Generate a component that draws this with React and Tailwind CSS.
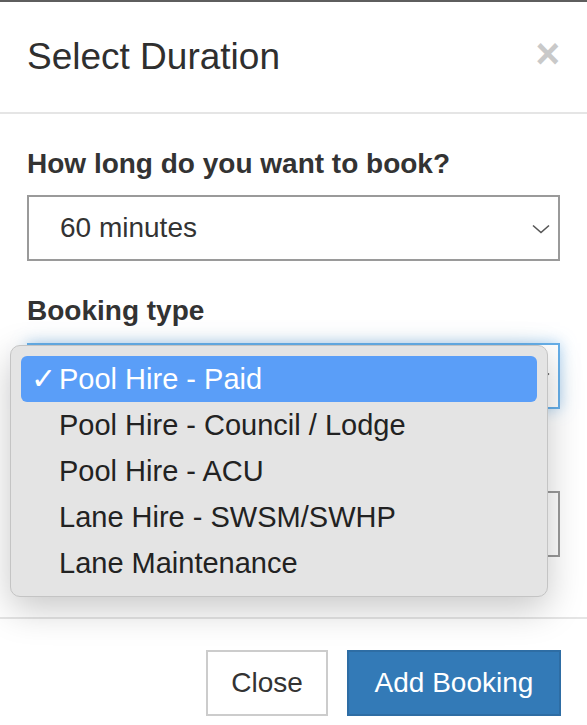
import { useState } from 'react';

const font = { fontFamily: '"Liberation Sans", Arial, Helvetica, sans-serif' };

const bookingTypes = [
  'Pool Hire - Paid',
  'Pool Hire - Council / Lodge',
  'Pool Hire - ACU',
  'Lane Hire - SWSM/SWHP',
  'Lane Maintenance',
];

const Chevron = ({ className }) => (
  <svg className={className} width="18" height="10" viewBox="0 0 18 10" fill="none">
    <polyline points="1,1.5 9,8.5 17,1.5" stroke="#555" strokeWidth="1.6" />
  </svg>
);

const App = () => {
  const [selected] = useState(0);

  return (
    <div className="relative h-[725px] w-[587px] overflow-hidden bg-white text-[#333]" style={font}>
      <div className="h-[2px] bg-[#5e5e5e]" />

      {/* header */}
      <div className="flex h-[112px] items-center justify-between border-b-2 border-[#e5e5e5] pl-[27px] pr-[27px]">
        <h4 className="text-[37px] leading-[40px] text-[#2f2f2f]">Select Duration</h4>
        <span className="text-[42px] font-bold leading-none text-[#c9c9c9] -mt-[6px]">×</span>
      </div>

      {/* body */}
      <div className="px-[27px] pt-[30px] pb-[30px]">
        <div className="mb-[30px]">
          <label className="mb-[11px] block text-[28px] font-bold leading-[40px]">How long do you want to book?</label>
          <div className="relative flex h-[66px] items-center border-2 border-[#9a9a9a] bg-white pl-[31px]">
            <span className="text-[28px] leading-none text-[#333]">60 minutes</span>
            <Chevron className="absolute right-[8px] top-[27px]" />
          </div>
        </div>

        <div className="mb-[30px]">
          <label className="mb-[12px] block text-[28px] font-bold leading-[40px]">Booking type</label>
          <div className="relative flex h-[66px] items-center border-2 border-[#66afe9] bg-white pl-[31px] shadow-[0_0_14px_rgba(102,175,233,0.55)]">
            <Chevron className="absolute right-[8px] top-[27px]" />
          </div>
        </div>

        <div className="mb-[30px]">
          <div className="mb-[12px] h-[40px]" />
          <div className="h-[66px] border-2 border-[#9a9a9a] bg-white" />
        </div>
      </div>

      {/* footer */}
      <div className="flex justify-end gap-[19px] border-t-2 border-[#e5e5e5] px-[26px] pt-[31px]">
        <button className="h-[66px] w-[122px] border-2 border-[#cccccc] bg-white text-[28px] text-[#333]">
          Close
        </button>
        <button className="h-[66px] w-[214px] border-2 border-[#2e6da4] bg-[#337ab7] text-[28px] text-white">
          Add Booking
        </button>
      </div>

      {/* native select popup */}
      <div className="absolute left-[10px] top-[345px] w-[538px] rounded-[10px] border border-[#c4c4c4] bg-[#e4e4e4] px-[10px] py-[10px] shadow-[0_12px_36px_rgba(0,0,0,0.22)]">
        {bookingTypes.map((type, i) => (
          <div
            key={type}
            className={`flex h-[46px] items-center rounded-[6px] text-[29px] leading-none ${
              i === selected ? 'bg-[#5a9ef8] text-white' : 'text-[#222]'
            }`}
          >
            <span className="w-[38px] pl-[10px] text-[30px]">{i === selected ? '✓' : ''}</span>
            <span>{type}</span>
          </div>
        ))}
      </div>
    </div>
  );
};

export default App;
